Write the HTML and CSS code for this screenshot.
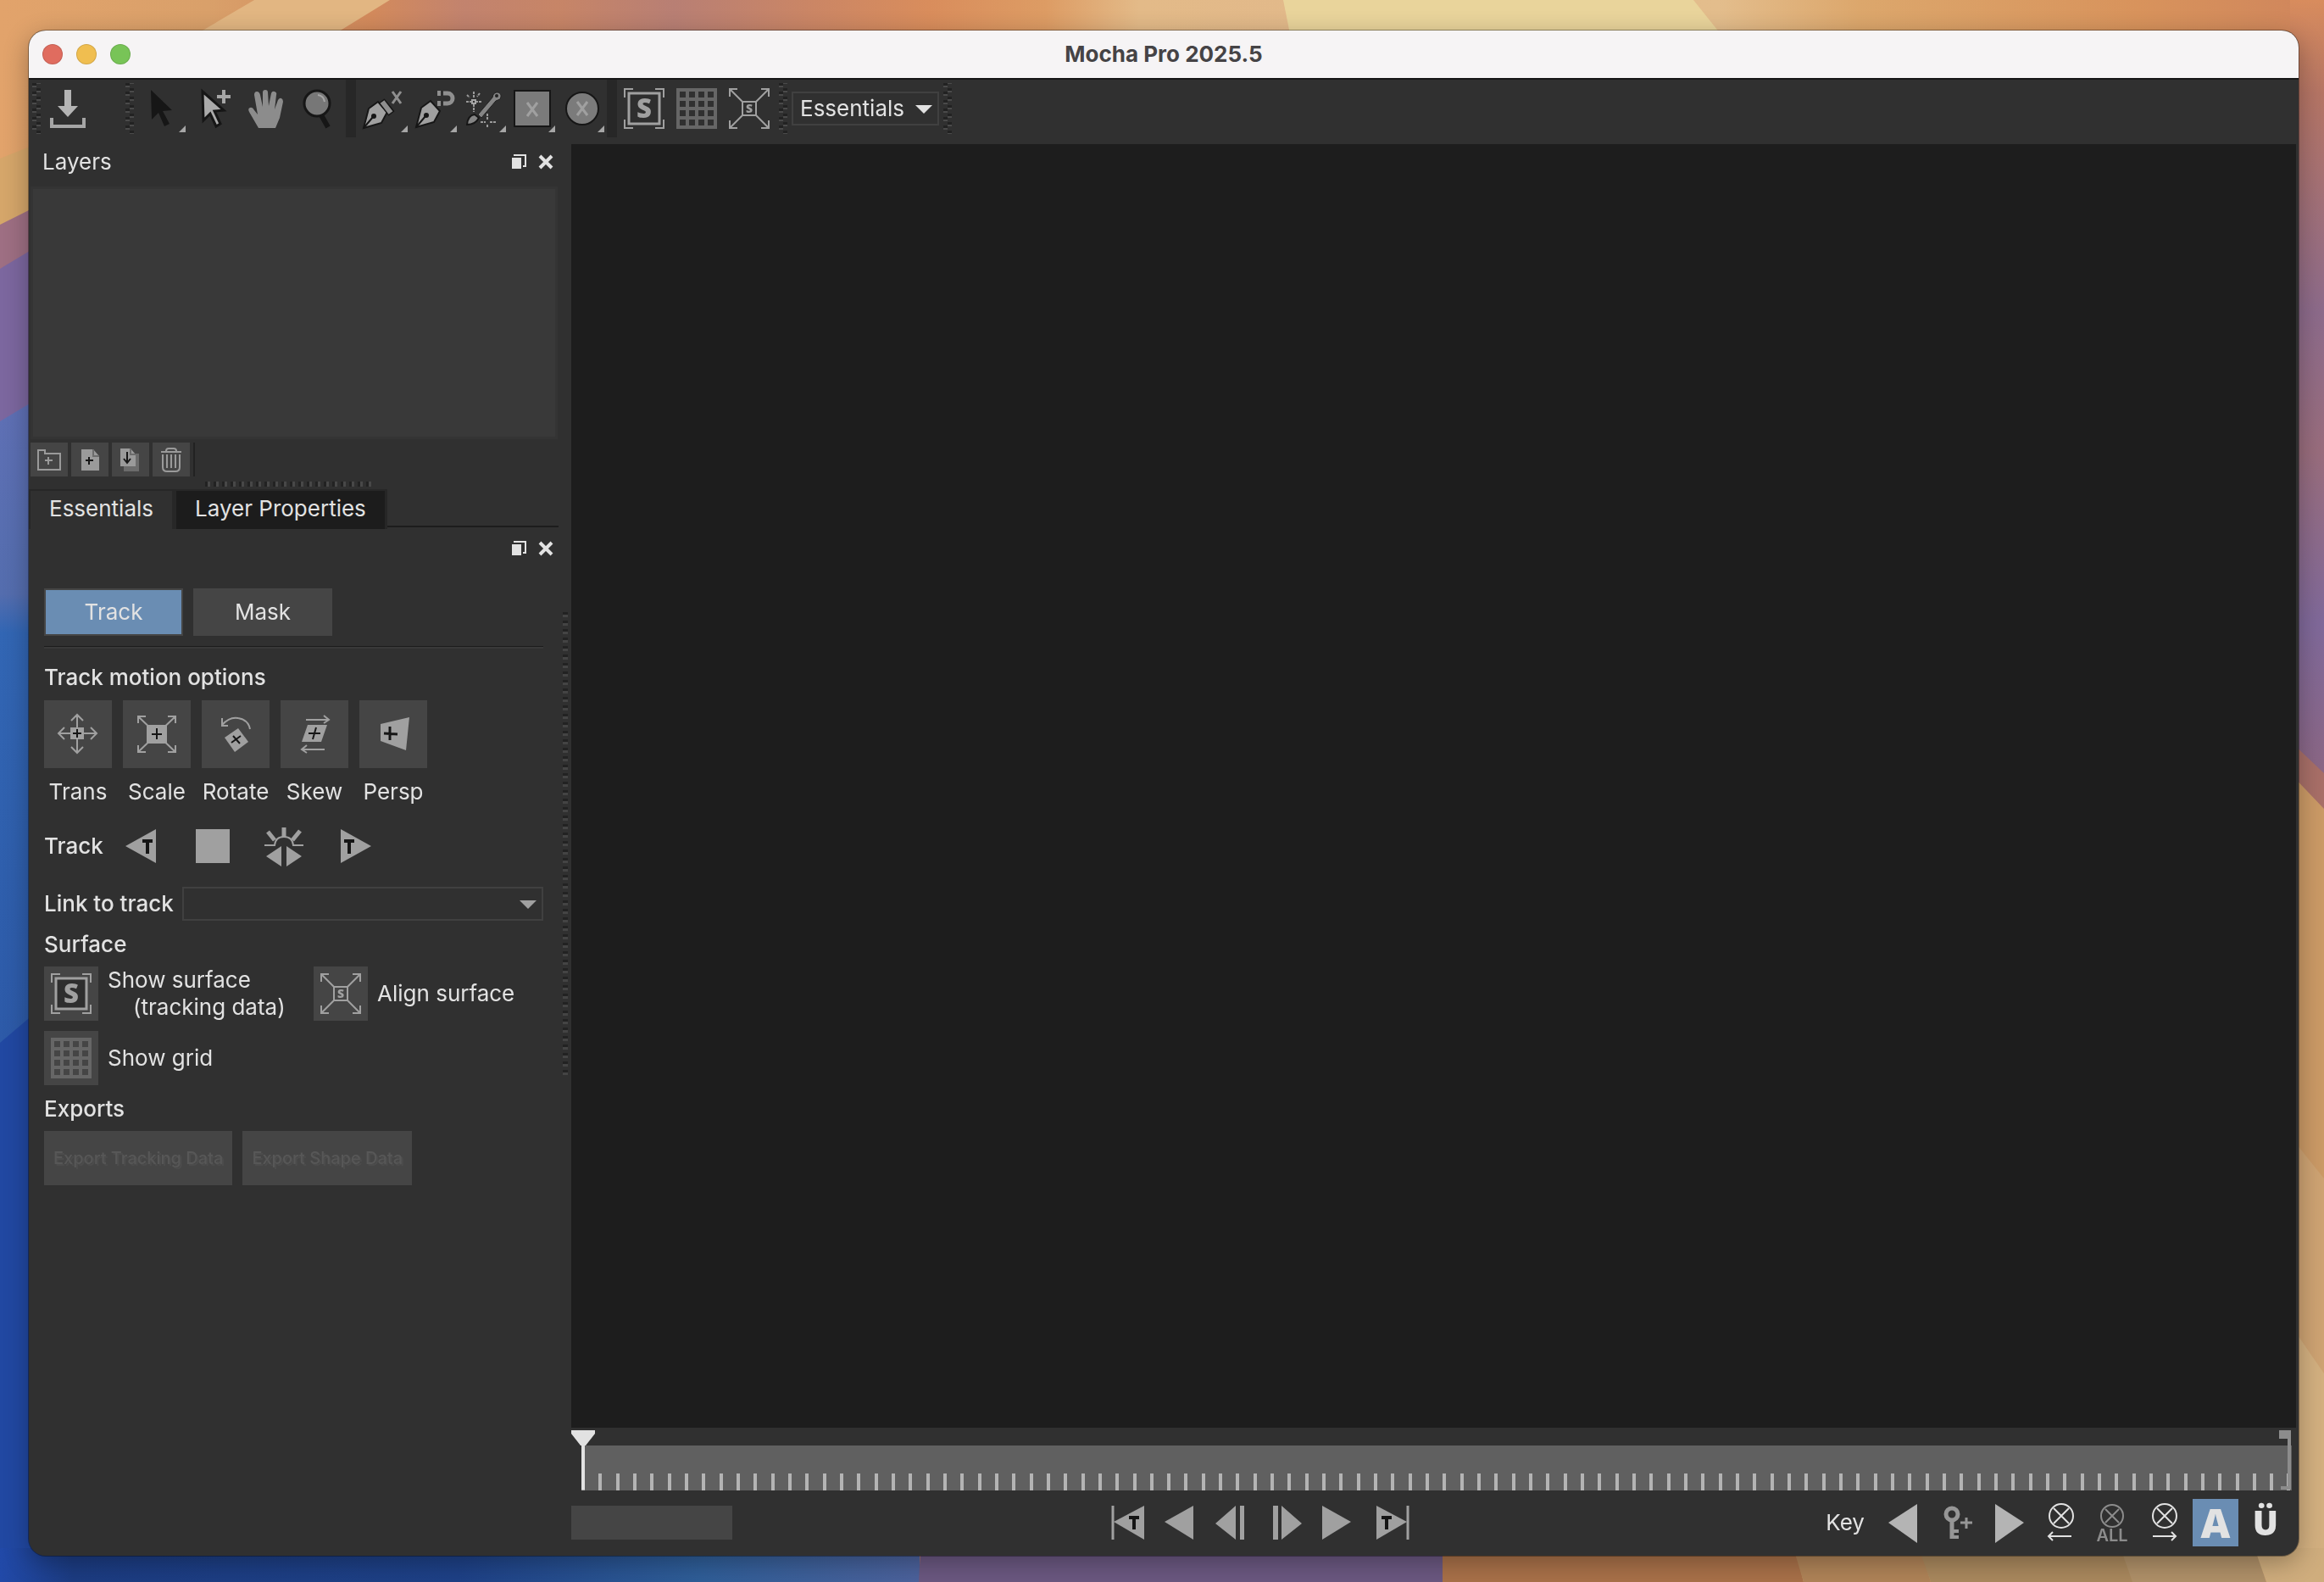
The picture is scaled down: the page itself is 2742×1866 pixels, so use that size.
FILE: index.html
```html
<!DOCTYPE html>
<html lang="en">
<head>
    <meta charset="UTF-8">
    <meta name="viewport" content="width=device-width, initial-scale=1.0">
    <title>Mocha Pro 2025.5</title>
    <link rel="stylesheet" href="styles.css">
</head>
<body>
    <!-- Shared icons -->
    <svg class="sprite" aria-hidden="true">
        <symbol id="float" viewBox="0 0 18 18">
            <path d="M3 1h14v13h-3" fill="none" stroke="#e2e2e2" stroke-width="2"/>
            <path d="M1 4h11v13H1z" fill="#e2e2e2"/>
        </symbol>
        <symbol id="close" viewBox="0 0 18 18">
            <path d="M2 2l14 14M16 2L2 16" stroke="#e2e2e2" stroke-width="4"/>
        </symbol>
        <symbol id="surface" viewBox="0 0 48 48">
            <path d="M1 11V1h10M37 1h10v10M47 37v10H37M11 47H1V37" fill="none" stroke="#a0a0a0" stroke-width="2"/>
            <path d="M6 6h36v36H6z" fill="#2e2e2e" stroke="#a0a0a0" stroke-width="3"/>
            <text x="24" y="35" text-anchor="middle" class="glyph" font-size="31">S</text>
        </symbol>
        <symbol id="grid" viewBox="0 0 48 48">
            <path d="M2 2h44v44H2zM13 2v44M24 2v44M35 2v44M2 13h44M2 24h44M2 35h44" fill="none" stroke="#666" stroke-width="4"/>
        </symbol>
        <symbol id="align" viewBox="0 0 48 48">
            <path d="M1 10V1h9M38 1h9v9M47 38v9h-9M10 47H1v-9M1 1l15 15M47 1L32 16M47 47L32 32M1 47l15-15M16 16h16v16H16z" fill="none" stroke="#a0a0a0" stroke-width="2"/>
            <text x="24" y="29" text-anchor="middle" class="glyph" font-size="14">S</text>
        </symbol>
        <symbol id="corner" viewBox="0 0 8 8"><path d="M8 0v8H0z" fill="#a6a6a6"/></symbol>
        <symbol id="nib" viewBox="0 0 60 60">
            <path d="M5 53l6-23 11-8 11 12-7 13z" fill="#a0a0a0" stroke="#161616" stroke-width="2"/>
            <path d="M5 53l11-13" stroke="#161616" stroke-width="2"/>
            <circle cx="17" cy="39" r="3" fill="#161616"/>
        </symbol>
    </svg>

    <!-- Desktop wallpaper -->
    <svg class="wallpaper" viewBox="0 0 2742 1866" preserveAspectRatio="none" aria-hidden="true">
        <defs>
            <linearGradient id="top" x1="0" x2="2742" y1="0" y2="0" gradientUnits="userSpaceOnUse">
                <stop offset="0" stop-color="#e2a36b"/>
                <stop offset=".09" stop-color="#d9a06a"/>
                <stop offset=".16" stop-color="#d38a5c"/>
                <stop offset=".2" stop-color="#c2836e"/>
                <stop offset=".24" stop-color="#c78567"/>
                <stop offset=".29" stop-color="#b87f74"/>
                <stop offset=".35" stop-color="#cb8665"/>
                <stop offset=".4" stop-color="#d98d5c"/>
                <stop offset=".45" stop-color="#dd9c64"/>
                <stop offset=".49" stop-color="#e3ba88"/>
                <stop offset=".56" stop-color="#e2b98a"/>
                <stop offset=".74" stop-color="#e3bd8c"/>
                <stop offset=".8" stop-color="#dca76c"/>
                <stop offset=".92" stop-color="#d8935c"/>
                <stop offset="1" stop-color="#cf855c"/>
            </linearGradient>
            <linearGradient id="right" x1="0" x2="0" y1="0" y2="1">
                <stop offset="0" stop-color="#d88c5d"/>
                <stop offset=".12" stop-color="#b57565"/>
                <stop offset=".4" stop-color="#8d6b8b"/>
                <stop offset=".58" stop-color="#996d7d"/>
                <stop offset=".8" stop-color="#80699a"/>
                <stop offset="1" stop-color="#8c6784"/>
            </linearGradient>
            <linearGradient id="blue" x1="0" x2="0" y1="0" y2="1">
                <stop offset="0" stop-color="#5f70b5"/>
                <stop offset=".3" stop-color="#546dae"/>
                <stop offset=".36" stop-color="#3266b4"/>
                <stop offset="1" stop-color="#2d5aa8"/>
            </linearGradient>
            <linearGradient id="bottom" x1="0" x2="1085" y1="0" y2="0" gradientUnits="userSpaceOnUse">
                <stop offset="0" stop-color="#2149a8"/>
                <stop offset=".08" stop-color="#1c3c82"/>
                <stop offset=".5" stop-color="#1e4187"/>
                <stop offset=".76" stop-color="#2f5e98"/>
                <stop offset="1" stop-color="#4c629c"/>
            </linearGradient>
        </defs>
        <rect width="2742" height="1866" fill="url(#top)"/>
        <path d="M300 0h160l-65 40H232z" fill="#e2b682"/>
        <path d="M1514 0h484l32 40H1522z" fill="#e9d49b"/>
        <path d="M0 187l40-16v100L0 270z" fill="#d5a66a"/>
        <path d="M0 265l40-20v60L0 320z" fill="#9e6f83"/>
        <path d="M0 317l40-24v190L0 500z" fill="#7c679f"/>
        <path d="M0 497l40-24v760H0z" fill="url(#blue)"/>
        <path d="M0 1230l40-34v670H0z" fill="#2148a2"/>
        <path d="M2702 0h40v920l-40-44z" fill="url(#right)"/>
        <path d="M2702 874l40 38v50l-40-48z" fill="#a86f68"/>
        <path d="M2702 912l40 42v440l-40-40z" fill="#cb9a66"/>
        <path d="M2702 1340l40 50v240l-40-50z" fill="#cea373"/>
        <path d="M2702 1562l40 58v246h-40z" fill="#d3b080"/>
        <path d="M0 1826h1085v40H0z" fill="url(#bottom)"/>
        <path d="M1086 1826h616v40h-618z" fill="#6b5881"/>
        <path d="M1702 1826h416l10 40h-426z" fill="#a97149"/>
        <path d="M2116 1826h150l12 40h-150z" fill="#b08458"/>
        <path d="M2264 1826h240l14 40h-240z" fill="#aa895e"/>
        <path d="M2502 1826h160l12 40h-158z" fill="#b09169"/>
        <path d="M2660 1826h82v40h-68z" fill="#cfad7d"/>
    </svg>

    <div class="window">
        <header class="titlebar">
            <div class="lights">
                <button class="light red" aria-label="Close window"></button>
                <button class="light yellow" aria-label="Minimize window"></button>
                <button class="light green" aria-label="Zoom window"></button>
            </div>
            <h1>Mocha Pro 2025.5</h1>
        </header>

        <!-- Toolbar -->
        <div class="toolbar">
            <span class="grip"></span>
            <button class="tool save" aria-label="Save project">
                <svg viewBox="0 0 60 60"><path d="M27 8h8v19h8L31 40 19 27h8z" fill="#b4b4b4"/><path d="M12 41v10h38V41" fill="none" stroke="#a6a6a6" stroke-width="4"/></svg>
            </button>
            <span class="grip"></span>
            <div class="tool-group select-group">
                <button class="tool" aria-label="Select">
                    <svg viewBox="0 0 60 60"><path d="M17 8l25 24-11 1 8 15-6 3-7-16-8 8z" fill="#161616"/><use href="#corner" x="50" y="50" width="8" height="8"/></svg>
                </button>
                <button class="tool" aria-label="Add to selection">
                    <svg viewBox="0 0 60 60"><path d="M17 10l25 22-11 1 7 15-5 3-7-15-8 8z" fill="#aaa" stroke="#161616" stroke-width="3"/><path d="M42 8v16M34 16h16" stroke="#a6a6a6" stroke-width="4"/></svg>
                </button>
                <button class="tool" aria-label="Pan">
                    <svg viewBox="0 0 60 60"><path d="M22 53L11 34q-2-4 1-5t5 3l4 5-4-23q0-4 3-4t4 4l3 14V11q0-3 3-3t3 3l1 16 3-15q1-3 4-2t2 4l-2 17 4-11q2-3 4-2t2 4l-4 19-5 12z" fill="#8c8c8c"/></svg>
                </button>
                <button class="tool" aria-label="Zoom">
                    <svg viewBox="0 0 60 60"><path d="M34 36l9 16" stroke="#161616" stroke-width="6"/><circle cx="30" cy="24" r="15" fill="#777" stroke="#161616" stroke-width="3"/><path d="M31 14q7 1 8 8" fill="none" stroke="#a6a6a6" stroke-width="2"/></svg>
                </button>
            </div>
            <span class="bar"></span>
            <div class="tool-group shape-group">
                <button class="tool" aria-label="Create X-Spline layer">
                    <svg viewBox="0 0 60 60"><use href="#nib" x="1" width="60" height="60"/><path d="M27 21l12 15" stroke="#161616" stroke-width="9"/><path d="M28 22l10 13" stroke="#8f8f8f" stroke-width="6"/><path d="M40 10l10 14M50 10L40 24" stroke="#8f8f8f" stroke-width="3"/><use href="#corner" x="50" y="50" width="8" height="8"/></svg>
                </button>
                <button class="tool" aria-label="Create magnetic layer">
                    <svg viewBox="0 0 60 60"><use href="#nib" x="5" y="-1" width="60" height="60"/><path d="M42 12h5a6 6 0 0 1 0 12h-5" fill="none" stroke="#8f8f8f" stroke-width="5"/><path d="M37 9v6M37 21v6" stroke="#8f8f8f" stroke-width="4"/><use href="#corner" x="50" y="50" width="8" height="8"/></svg>
                </button>
                <button class="tool" aria-label="Area brush">
                    <svg viewBox="0 0 60 60"><g transform="translate(3 0)"><path d="M22 37L39 17q1-7 7-6 5 2 2 8l-5 2-17 20z" fill="#858585" stroke="#222" stroke-width="1"/><circle cx="44" cy="15" r="2" fill="#222"/><path d="M9 49q1-11 9-12l5 4q-4 8-14 8z" fill="#858585" stroke="#161616" stroke-width="2"/><path d="M17 10v8M17 25v9M8 22h7M19 22h8M9 14l3 3M24 12l-3 4M33 36v8M33 49v4M25 46h6M36 46h7" stroke="#9a9a9a" stroke-width="2" stroke-dasharray="3 1"/><path d="M15 20h4v4h-4z" fill="none" stroke="#a6a6a6" stroke-width="2"/></g><use href="#corner" x="50" y="50" width="8" height="8"/></svg>
                </button>
                <button class="tool" aria-label="Create rectangle X-Spline layer">
                    <svg viewBox="0 0 60 60"><path d="M10 9h42v42H10z" fill="#7b7b7b" stroke="#161616" stroke-width="2"/><path d="M25 23l12 16M37 23L25 39" stroke="#a0a0a0" stroke-width="3"/><use href="#corner" x="50" y="50" width="8" height="8"/></svg>
                </button>
                <button class="tool" aria-label="Create ellipse X-Spline layer">
                    <svg viewBox="0 0 60 60"><circle cx="32" cy="30" r="19" fill="#7b7b7b" stroke="#161616" stroke-width="2"/><path d="M26 22l12 16M38 22L26 38" stroke="#a0a0a0" stroke-width="3"/><use href="#corner" x="50" y="50" width="8" height="8"/></svg>
                </button>
            </div>
            <span class="bar"></span>
            <div class="tool-group surface-group">
                <button class="tool" aria-label="Show planar surface"><svg class="icon48"><use href="#surface"/></svg></button>
                <button class="tool" aria-label="Show planar grid"><svg class="icon48"><use href="#grid"/></svg></button>
                <button class="tool" aria-label="Align planar surface"><svg class="icon48"><use href="#align"/></svg></button>
            </div>
            <span class="grip"></span>
            <span class="dropdown workspace">
                <select aria-label="Workspace"><option>Essentials</option></select>
            </span>
            <span class="grip"></span>
        </div>

        <div class="workarea">
            <aside class="sidebar">
                <!-- Layers panel -->
                <div class="panel-head">
                    <h2>Layers</h2>
                    <button aria-label="Float layers panel"><svg><use href="#float"/></svg></button>
                    <button aria-label="Close layers panel"><svg><use href="#close"/></svg></button>
                </div>
                <div class="layer-list"></div>
                <div class="layer-buttons">
                    <button aria-label="New group"><svg viewBox="0 0 44 40"><path d="M9 9h8v4h18v19H9z" fill="none" stroke="#9a9a9a" stroke-width="2"/><path d="M21 17v9M17 21h9" stroke="#9a9a9a" stroke-width="2"/></svg></button>
                    <button aria-label="New layer"><svg viewBox="0 0 44 40"><path d="M12 8h14l7 8v17H12z" fill="#9a9a9a"/><path d="M26 8v8h7" fill="none" stroke="#6c6c6c" stroke-width="2"/><path d="M21 17v9M17 21h9" stroke="#161616" stroke-width="2"/></svg></button>
                    <button aria-label="Duplicate layer"><svg viewBox="0 0 44 40"><path d="M14 13h18v21H14z" fill="#6c6c6c"/><path d="M10 7h12l6 7v14H10z" fill="#9a9a9a"/><path d="M22 7v7h6" fill="none" stroke="#6c6c6c" stroke-width="2"/><path d="M18 11v13M14 19l4 5 4-5" fill="none" stroke="#161616" stroke-width="2"/></svg></button>
                    <button aria-label="Delete layer"><svg viewBox="0 0 44 40"><path d="M10 11h24M16 10q0-3 3-3h6q3 0 3 3M12 14v15q0 5 5 5h10q5 0 5-5V14M17 14v16M22 14v16M27 14v16" fill="none" stroke="#9a9a9a" stroke-width="2"/></svg></button>
                    <span class="divider"></span>
                </div>
                <div class="splitter"></div>

                <!-- Essentials panel -->
                <div class="tabs">
                    <button class="tab active">Essentials</button>
                    <button class="tab">Layer Properties</button>
                </div>
                <div class="panel-head essentials-head">
                    <button aria-label="Float essentials panel"><svg><use href="#float"/></svg></button>
                    <button aria-label="Close essentials panel"><svg><use href="#close"/></svg></button>
                </div>
                <div class="essentials">
                    <div class="modes">
                        <button class="mode active">Track</button>
                        <button class="mode">Mask</button>
                    </div>
                    <hr>
                    <h3>Track motion options</h3>
                    <div class="motion">
                        <div class="option">
                            <button id="trans"><svg viewBox="0 0 80 80"><path d="M39 17v45M17 39h45M32 24l7-7 7 7M32 55l7 7 7-7M24 32l-7 7 7 7M55 32l7 7-7 7" fill="none" stroke="#a0a0a0" stroke-width="2"/><path d="M31 32h16v14H31z" fill="#a0a0a0"/><path d="M39 34v10M34 39h10" stroke="#161616" stroke-width="2"/></svg></button>
                            <label for="trans">Trans</label>
                        </div>
                        <div class="option">
                            <button id="scale"><svg viewBox="0 0 80 80"><path d="M18 27v-8h9M53 19h9v8M62 53v8h-9M27 61h-9v-8M18 19l44 42M62 19L18 61" fill="none" stroke="#a0a0a0" stroke-width="2"/><path d="M28 29h24v22H28z" fill="#a0a0a0"/><path d="M40 33v13M34 40h12" stroke="#161616" stroke-width="2"/></svg></button>
                            <label for="scale">Scale</label>
                        </div>
                        <div class="option">
                            <button id="rotate"><svg viewBox="0 0 80 80"><path d="M24 29q9-10 19-8 12 2 14 13M24 21v9h7" fill="none" stroke="#a0a0a0" stroke-width="2"/><path d="M43 33l12 16-16 12-12-17z" fill="#a0a0a0"/><path d="M37 42l8 9M46 42l-11 8" stroke="#161616" stroke-width="2"/></svg></button>
                            <label for="rotate">Rotate</label>
                        </div>
                        <div class="option">
                            <button id="skew"><svg viewBox="0 0 80 80"><path d="M30 23h27M51 18l6 5-6 4M52 58H25M31 53l-6 5 6 4" fill="none" stroke="#a0a0a0" stroke-width="2"/><path d="M32 29h23l-7 20H25z" fill="#a0a0a0"/><path d="M42 32l-4 14M33 39h14" stroke="#161616" stroke-width="2"/></svg></button>
                            <label for="skew">Skew</label>
                        </div>
                        <div class="option">
                            <button id="persp"><svg viewBox="0 0 80 80"><path d="M25 28l34-8-4 39-30-11z" fill="#a0a0a0"/><path d="M36 31v16M29 39l16 1" stroke="#161616" stroke-width="3"/></svg></button>
                            <label for="persp">Persp</label>
                        </div>
                    </div>
                    <div class="track-row">
                        <span class="strong">Track</span>
                        <button aria-label="Track backwards"><svg viewBox="0 0 48 48"><path d="M41 4v40L5 24z" fill="#a0a0a0"/><path d="M25 18h12M31 18v15" stroke="#161616" stroke-width="4"/></svg></button>
                        <button aria-label="Stop tracking"><svg viewBox="0 0 48 48"><path d="M4 4h40v40H4z" fill="#a0a0a0"/></svg></button>
                        <button aria-label="Track both ways"><svg viewBox="0 0 48 48"><path d="M21 24v24L3 36zM27 24v24l18-12z" fill="#a0a0a0"/><path d="M1 23h12q1-10 11-10t11 10h12" fill="none" stroke="#a0a0a0" stroke-width="2"/><path d="M24 2v12M5 7l8 10M43 6l-9 11" stroke="#a0a0a0" stroke-width="5"/></svg></button>
                        <button aria-label="Track forwards"><svg viewBox="0 0 48 48"><path d="M7 4v40l36-20z" fill="#a0a0a0"/><path d="M11 18h12M17 18v15" stroke="#161616" stroke-width="4"/></svg></button>
                    </div>
                    <div class="link-row">
                        <label class="strong" for="link">Link to track</label>
                        <span class="dropdown link"><select id="link"><option></option></select></span>
                    </div>
                    <h3>Surface</h3>
                    <div class="surface-options">
                        <div class="surface-option">
                            <button id="show-surface"><svg class="icon48"><use href="#surface"/></svg></button>
                            <label for="show-surface">Show surface <span>(tracking data)</span></label>
                        </div>
                        <div class="surface-option">
                            <button id="align-surface"><svg class="icon48"><use href="#align"/></svg></button>
                            <label for="align-surface">Align surface</label>
                        </div>
                        <div class="surface-option">
                            <button id="show-grid"><svg class="icon48"><use href="#grid"/></svg></button>
                            <label for="show-grid">Show grid</label>
                        </div>
                    </div>
                    <h3>Exports</h3>
                    <div class="exports">
                        <button disabled>Export Tracking Data</button>
                        <button disabled>Export Shape Data</button>
                    </div>
                </div>
                <div class="side-grip"></div>
            </aside>

            <main class="viewer">
                <div class="canvas"></div>
                <div class="timeline">
                    <div class="track"></div>
                    <svg class="playhead" viewBox="0 0 28 70"><path d="M0 0h28v4L17 18H11L0 4z" fill="#e2e2e2"/><path d="M14 16v54" stroke="#e2e2e2" stroke-width="4"/></svg>
                    <svg class="outpoint" viewBox="0 0 14 70"><path d="M0 0h14v70H2v-4h8V10H0z" fill="#8c8c8c"/></svg>
                </div>
                <div class="controls">
                    <input class="frame" type="text" aria-label="Current frame">
                    <div class="transport">
                        <button aria-label="Track to start"><svg viewBox="0 0 60 60"><path d="M12 10v40" stroke="#a0a0a0" stroke-width="3"/><path d="M49 10v40L13 29z" fill="#a0a0a0"/><path d="M31 24h12M37 24v14" stroke="#161616" stroke-width="4"/></svg></button>
                        <button aria-label="Play backwards"><svg viewBox="0 0 60 60"><path d="M47 10v40L13 29z" fill="#a0a0a0"/></svg></button>
                        <button aria-label="Step back"><svg viewBox="0 0 60 60"><path d="M37 10v40L13 31zM42 10h5v40h-5z" fill="#a0a0a0"/></svg></button>
                        <button aria-label="Step forward" class="step-forward"><svg viewBox="0 0 60 60"><path d="M23 10v40l24-19zM13 10h6v40h-6z" fill="#a0a0a0"/></svg></button>
                        <button aria-label="Play forwards"><svg viewBox="0 0 60 60"><path d="M11 10v40l34-21z" fill="#a0a0a0"/></svg></button>
                        <button aria-label="Track to end"><svg viewBox="0 0 60 60"><path d="M52 10v40" stroke="#a0a0a0" stroke-width="3"/><path d="M15 10v40l36-21z" fill="#a0a0a0"/><path d="M21 24h12M27 24v14" stroke="#161616" stroke-width="4"/></svg></button>
                    </div>
                    <div class="keys">
                        <span>Key</span>
                        <button aria-label="Previous keyframe"><svg viewBox="0 0 60 60"><path d="M47 8v46L13 30z" fill="#b4b4b4"/></svg></button>
                        <button aria-label="Add keyframe"><svg viewBox="0 0 60 60"><circle cx="27" cy="20" r="7" fill="none" stroke="#969696" stroke-width="5"/><path d="M27 26v23" stroke="#969696" stroke-width="5"/><path d="M27 40h8M27 47h8" stroke="#969696" stroke-width="4"/><path d="M44 24v13M37 30h14" stroke="#969696" stroke-width="3"/></svg></button>
                        <button aria-label="Next keyframe"><svg viewBox="0 0 60 60"><path d="M17 8v46l34-24z" fill="#b4b4b4"/></svg></button>
                        <button aria-label="Delete keyframes before"><svg viewBox="0 0 60 60"><circle cx="34" cy="22" r="14" fill="none" stroke="#e2e2e2" stroke-width="2"/><path d="M25 13l18 18M43 13L25 31M46 46H20M24 41l-5 5 5 5" fill="none" stroke="#e2e2e2" stroke-width="2"/></svg></button>
                        <button aria-label="Delete all keyframes"><svg viewBox="0 0 60 60"><circle cx="33" cy="22" r="13" fill="none" stroke="#8c8c8c" stroke-width="2"/><path d="M25 14l16 16M41 14L25 30" stroke="#8c8c8c" stroke-width="2"/><text x="33" y="52" text-anchor="middle" class="all">ALL</text></svg></button>
                        <button aria-label="Delete keyframes after"><svg viewBox="0 0 60 60"><circle cx="34" cy="22" r="14" fill="none" stroke="#e2e2e2" stroke-width="2"/><path d="M25 13l18 18M43 13L25 31M20 46h26M42 41l5 5-5 5" fill="none" stroke="#e2e2e2" stroke-width="2"/></svg></button>
                        <button class="auto">A</button>
                        <button class="uber">Ü</button>
                    </div>
                </div>
            </main>
        </div>
    </div>
    <script src="timeline.js"></script>
</body>
</html>
```
FILE: styles.css
```css
* {
    box-sizing: border-box;
}
body {
    margin: 0;
    min-height: 100vh;
    padding: 36px 30px 31px 34px;
    display: flex;
    font-family: Inter, "Liberation Sans", sans-serif;
    font-size: 26px;
    line-height: 32px;
    color: #e2e2e2;
}
button, select, input {
    font: inherit;
    color: inherit;
    border: 0;
    padding: 0;
    margin: 0;
    background: none;
    border-radius: 0;
}
svg {
    display: block;
}
h1, h2, h3 {
    margin: 0;
    font-size: 26px;
    font-weight: 400;
}
.sprite {
    display: none;
}
.wallpaper {
    position: fixed;
    top: 0;
    left: 0;
    width: 100%;
    height: 100%;
    z-index: -1;
}
.glyph {
    font-family: "Open Sans", sans-serif;
    font-weight: 800;
    fill: #a0a0a0;
}
.window {
    flex: 1;
    display: flex;
    flex-direction: column;
    overflow: hidden;
    border-radius: 20px;
    background-color: #303030;
    box-shadow: 0 0 0 1px rgba(0,0,0,0.35), 0 8px 30px rgba(0,0,0,0.3);
}

/* Title bar */
.titlebar {
    display: grid;
    grid-template-columns: 1fr auto 1fr;
    align-items: center;
    height: 56px;
    padding-bottom: 1px;
    background-color: #f6f4f5;
}
.titlebar h1 {
    font-weight: 700;
    color: #454345;
}
.lights {
    display: flex;
    gap: 16px;
    padding-left: 16px;
}
.light {
    width: 24px;
    height: 24px;
    border-radius: 50%;
    border: 1px solid rgba(0,0,0,0.12);
}
.red { background-color: #e06c5f; }
.yellow { background-color: #f0be50; }
.green { background-color: #78c457; }

/* Toolbar */
.toolbar {
    display: flex;
    align-items: center;
    height: 78px;
    padding: 0 4px 8px;
    border-top: 2px solid #161616;
}
.grip {
    width: 10px;
    height: 60px;
    background:
        linear-gradient(#222 3px, #4a4a4a 3px 5px, transparent 5px) 0 0 / 5px 10px repeat-y,
        linear-gradient(#222 3px, #4a4a4a 3px 5px, transparent 5px) 5px 6px / 5px 10px repeat-y;
}
.tool-group {
    display: flex;
}
.tool {
    display: flex;
    justify-content: center;
    align-items: center;
    width: 58px;
    height: 60px;
}
.tool svg {
    width: 60px;
    height: 60px;
    flex: none;
}
.tool .icon48,
.icon48 {
    width: 48px;
    height: 48px;
}
.save {
    margin: 0 40px 0 2px;
}
.select-group {
    padding: 0 4px 0 2px;
}
.select-group .tool {
    width: 61px;
}
.bar {
    align-self: stretch;
    width: 12px;
    background-color: #272727;
}
.shape-group {
    padding: 0 2px 0 4px;
}
.surface-group {
    padding: 0 4px 0 1px;
}
.surface-group .tool {
    width: 62px;
}
.dropdown {
    position: relative;
    display: block;
    height: 40px;
}
.dropdown select {
    appearance: none;
    width: 100%;
    height: 40px;
    padding: 0 36px 0 8px;
    border: 2px solid #404040;
    background-color: #303030;
}
.dropdown::after {
    content: "";
    position: absolute;
    top: 16px;
    right: 8px;
    border: 10px solid transparent;
    border-top-color: #e2e2e2;
    border-bottom: 0;
}
.workspace {
    width: 174px;
    margin: 0 5px;
}

/* Sidebar */
.workarea {
    flex: 1;
    display: flex;
}
.sidebar {
    position: relative;
    width: 640px;
    flex: none;
}
.panel-head {
    display: flex;
    align-items: center;
    gap: 14px;
    height: 50px;
    padding: 0 21px 8px 16px;
}
.panel-head h2 {
    margin-right: auto;
}
.panel-head svg {
    width: 18px;
    height: 18px;
}
.layer-list {
    height: 298px;
    margin: 0 16px 4px 2px;
    border: 3px solid #343434;
    background-color: #393939;
}
.layer-buttons {
    display: flex;
    gap: 4px;
    padding-left: 2px;
}
.layer-buttons button {
    width: 44px;
    height: 40px;
    background-color: #454545;
}
.divider {
    width: 2px;
    background-color: #222;
}
.splitter {
    width: 198px;
    height: 6px;
    margin: 6px 0 3px 208px;
    background: linear-gradient(90deg, #222 3px, #484848 3px 6px, transparent 6px) 0 0 / 10px 6px repeat-x;
}
.tabs {
    display: flex;
    height: 47px;
    margin-right: 15px;
    background: linear-gradient(#1c1c1c, #1c1c1c) 0 43px / 100% 2px no-repeat;
}
.tab {
    padding: 0 22px 3px;
    border: 2px solid #272727;
    border-width: 2px 3px 0 2px;
    background-color: #1c1c1c;
}
.tab.active {
    background-color: #303030;
}
.essentials-head {
    justify-content: flex-end;
    height: 54px;
}
.essentials {
    padding: 16px 33px 0 18px;
}
.modes {
    display: flex;
    gap: 12px;
}
.mode {
    width: 164px;
    height: 56px;
    border: 2px solid #454545;
    background-color: #454545;
}
.mode.active {
    background-color: #6a8db3;
}
hr {
    height: 3px;
    margin: 12px 0 18px;
    border: 0;
    border-top: 1px solid #1c1c1c;
    background-color: #393939;
}
h3, .strong {
    font-weight: 500;
}
.motion {
    display: flex;
    gap: 13px;
    margin-top: 11px;
}
.option {
    width: 80px;
    text-align: center;
    white-space: nowrap;
}
.option button {
    display: block;
    width: 80px;
    height: 80px;
    margin-bottom: 12px;
    background-color: #454545;
}
.track-row {
    display: flex;
    align-items: center;
    height: 48px;
    margin-top: 24px;
}
.track-row .strong {
    width: 91px;
}
.track-row button {
    margin-right: 36px;
}
.track-row svg {
    width: 48px;
    height: 48px;
}
.link-row {
    display: flex;
    align-items: center;
    gap: 10px;
    margin: 24px 0 12px;
}
.link {
    flex: 1;
}
.link::after {
    border-top-color: #a0a0a0;
}
.surface-options {
    display: grid;
    grid-template-columns: 318px 1fr;
    gap: 12px 0;
    margin: 10px 0 12px;
}
.surface-option {
    display: flex;
    align-items: center;
    gap: 11px;
}
.surface-option button {
    display: flex;
    align-items: center;
    justify-content: center;
    width: 64px;
    height: 64px;
    background-color: #454545;
}
.surface-option span {
    display: block;
    padding-left: 30px;
}
.exports {
    display: flex;
    gap: 12px;
    margin-top: 10px;
}
.exports button {
    height: 64px;
    padding: 0 11px;
    font-size: 20px;
    font-weight: 500;
    color: #575757;
    text-shadow: 2px 2px #4c4c4c;
    background-color: #454545;
}
.side-grip {
    position: absolute;
    top: 552px;
    right: 4px;
    width: 6px;
    height: 546px;
    background: linear-gradient(#222 3px, #444 3px 6px, transparent 6px) 0 0 / 6px 10px repeat-y;
}

/* Viewer */
.viewer {
    flex: 1;
    display: flex;
    flex-direction: column;
    padding-right: 3px;
}
.canvas {
    flex: 1;
    background-color: #1d1d1d;
}
.timeline {
    position: relative;
    height: 74px;
    padding: 21px 5px 0 12px;
}
.track {
    display: flex;
    justify-content: space-between;
    align-items: flex-end;
    height: 53px;
    background-color: #606060;
}
.tick {
    width: 4px;
    height: 20px;
    background-color: #b4b4b4;
}
.playhead {
    position: absolute;
    top: 3px;
    left: 0;
    width: 28px;
    height: 70px;
}
.outpoint {
    position: absolute;
    top: 3px;
    right: 6px;
    width: 14px;
    height: 70px;
}
.controls {
    display: flex;
    justify-content: space-between;
    align-items: center;
    height: 77px;
    padding-bottom: 2px;
}
.controls svg {
    width: 60px;
    height: 60px;
}
.frame {
    width: 190px;
    height: 40px;
    background-color: #454545;
}
.transport,
.keys {
    display: flex;
    align-items: center;
}
.step-forward {
    margin-left: 8px;
}
.keys {
    padding: 0 9px 0 48px;
}
.keys span {
    margin-right: 15px;
}
.keys button {
    width: 61px;
}
.all {
    font-size: 20px;
    font-weight: 600;
    fill: #8c8c8c;
}
.keys .auto,
.keys .uber {
    width: 54px;
    height: 56px;
    font-family: "Open Sans", sans-serif;
    font-weight: 800;
    font-size: 48px;
    line-height: 56px;
}
.keys .auto {
    margin: 0 5px 0 6px;
    background-color: #6a8db3;
}
.keys .uber {
    font-size: 40px;
}
```
FILE: timeline.js
```js
// one tick per frame
const track = document.querySelector('.track');
for (let frame = 0; frame < 100; frame++) {
    const tick = document.createElement('span');
    tick.className = 'tick';
    track.appendChild(tick);
}
```
